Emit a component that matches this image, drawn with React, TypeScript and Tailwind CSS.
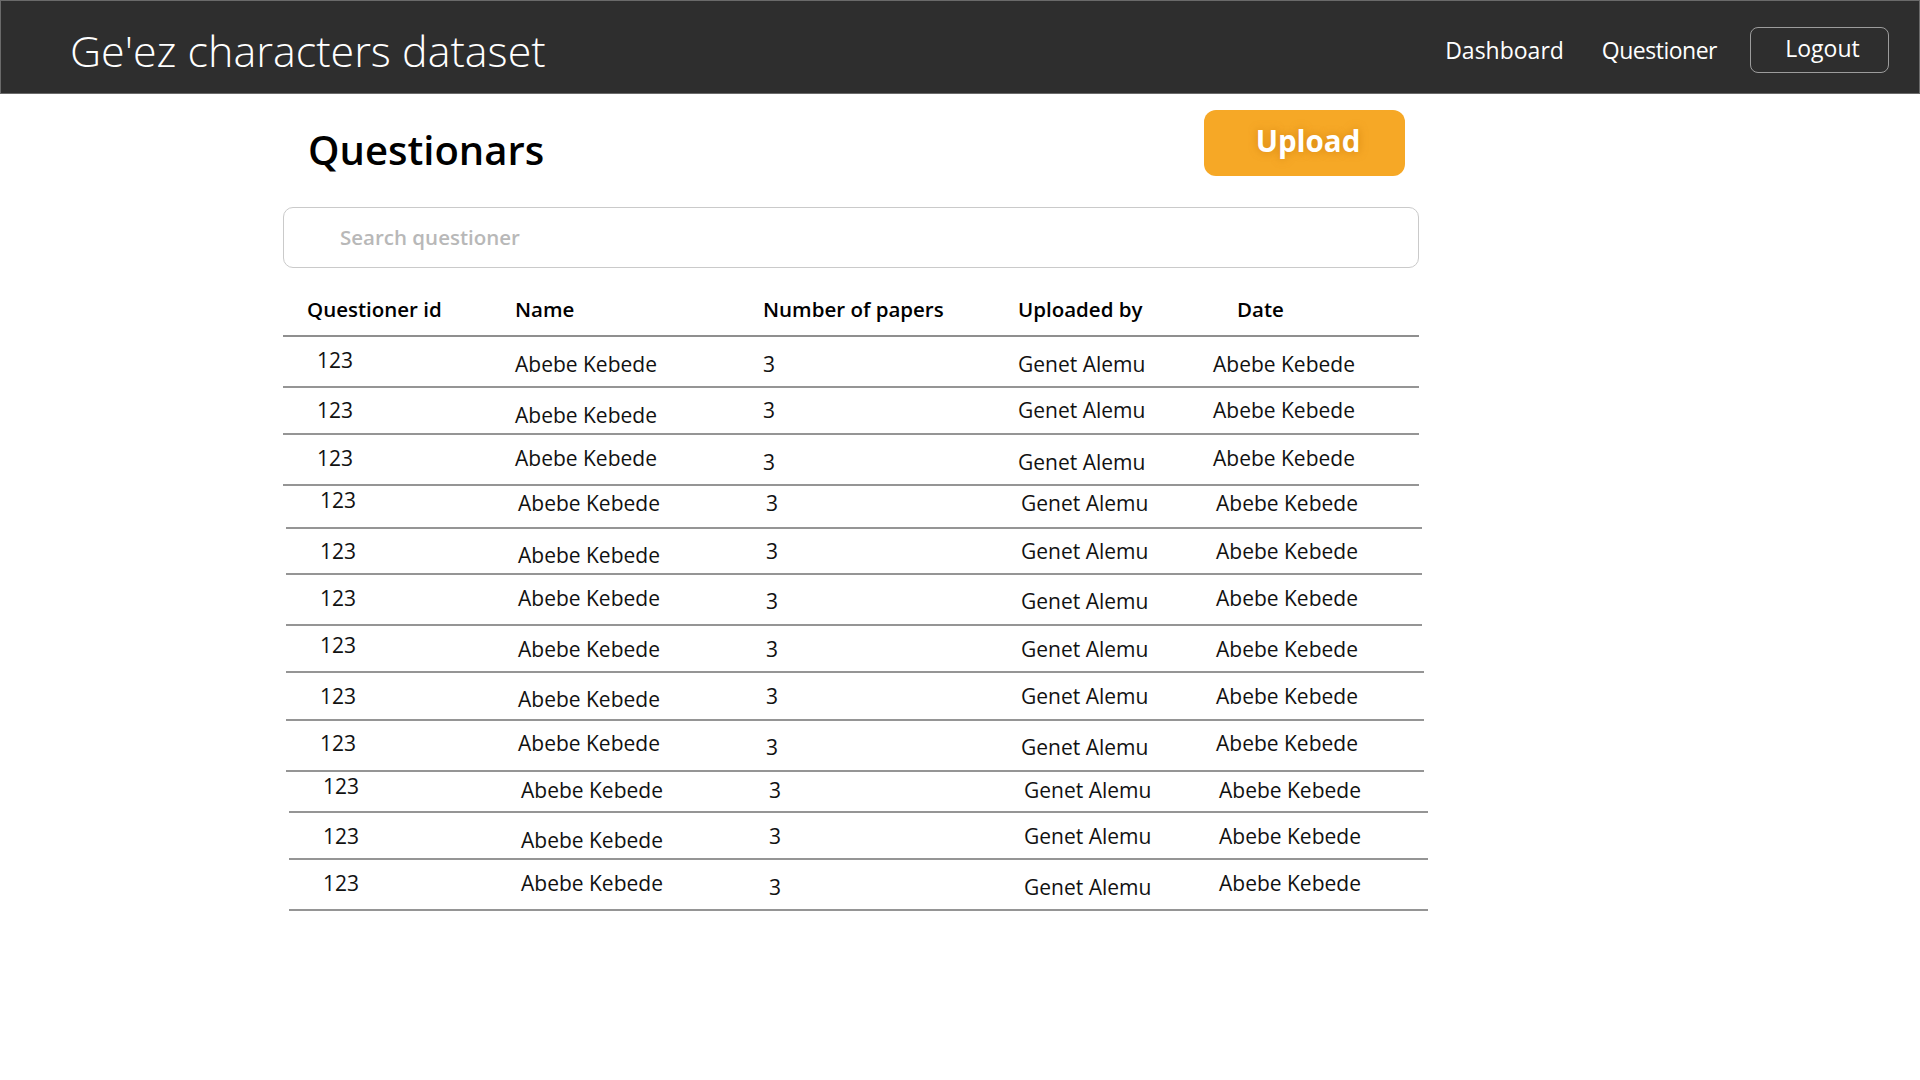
import React from "react";

type Pattern = "A" | "B" | "C";

interface Row {
  h: string;
  hi: string;
  lo: string;
  p: Pattern;
}

const groups: { ml: string; w: string; rows: Row[] }[] = [
  {
    ml: "ml-0",
    w: "w-[1136px]",
    rows: [
      { h: "h-[51px]", hi: "pt-[9px]", lo: "pt-[13px]", p: "A" },
      { h: "h-[47px]", hi: "pt-[8px]", lo: "pt-[13px]", p: "B" },
      { h: "h-[51px]", hi: "pt-[9px]", lo: "pt-[13px]", p: "C" },
    ],
  },
  {
    ml: "ml-[3px]",
    w: "w-[1136px]",
    rows: [
      { h: "h-[43px]", hi: "pt-0", lo: "pt-[3px]", p: "A" },
      { h: "h-[46px]", hi: "pt-[8px]", lo: "pt-[12px]", p: "B" },
      { h: "h-[51px]", hi: "pt-[9px]", lo: "pt-[12px]", p: "C" },
    ],
  },
  {
    ml: "ml-[3px]",
    w: "w-[1138px]",
    rows: [
      { h: "h-[47px]", hi: "pt-[5px]", lo: "pt-[9px]", p: "A" },
      { h: "h-[48px]", hi: "pt-[9px]", lo: "pt-[12px]", p: "B" },
      { h: "h-[51px]", hi: "pt-[8px]", lo: "pt-[12px]", p: "C" },
    ],
  },
  {
    ml: "ml-[6px]",
    w: "w-[1139px]",
    rows: [
      { h: "h-[41px]", hi: "pt-0", lo: "pt-[4px]", p: "A" },
      { h: "h-[47px]", hi: "pt-[9px]", lo: "pt-[13px]", p: "B" },
      { h: "h-[51px]", hi: "pt-[9px]", lo: "pt-[13px]", p: "C" },
    ],
  },
];

// which cells sit lower per pattern: [id, name, papers, uploader, date]
const lowMap: Record<Pattern, boolean[]> = {
  A: [false, true, true, true, true],
  B: [false, true, false, false, false],
  C: [false, false, true, true, false],
};

const widths = ["w-[198px]", "w-[248px]", "w-[255px]", "w-[195px]", "flex-1"];
const values = ["123", "Abebe Kebede", "3", "Genet Alemu", "Abebe Kebede"];

export default function App() {
  return (
    <div
      className="min-h-screen w-full bg-white text-black"
      style={{ fontFamily: '"Open Sans", "Noto Sans", sans-serif' }}
    >
      {/* Top bar */}
      <header className="flex h-[94px] items-center justify-between border border-[#6a6a6a] bg-[#2e2e2e] pl-[69px] pr-[30px] text-white">
        <h1 className="mt-[6px] text-[43px] font-light leading-none">
          Ge'ez characters dataset
        </h1>
        <nav className="mt-[6px] flex items-center">
          <a className="text-[23px] leading-none">Dashboard</a>
          <a className="ml-[38px] text-[23px] leading-none tracking-[-0.5px]">Questioner</a>
          <button className="ml-[33px] flex h-[46px] w-[139px] items-center justify-center rounded-[8px] border border-[#9c9c9c] pl-[6px] text-[23px] leading-none">
            <span className="-mt-[4px]">Logout</span>
          </button>
        </nav>
      </header>

      {/* Main */}
      <main className="ml-[283px] w-[1136px]">
        <div className="flex items-start justify-between pl-[25px] pr-[14px] pt-[16px]">
          <h2 className="mt-[20px] text-[40px] font-semibold leading-[40px]">Questionars</h2>
          <button className="flex h-[66px] w-[201px] items-center justify-center rounded-[12px] bg-[#f6a826] pl-[7px] text-[29.5px] font-bold leading-none text-white [text-shadow:0_0_8px_rgba(190,110,0,0.55)]">
            <span className="-mt-[4px]">Upload</span>
          </button>
        </div>

        <div className="mt-[31px] flex h-[61px] items-center rounded-[10px] border border-[#cacaca] pl-[56px]">
          <input
            className="w-full bg-transparent text-[20.5px] font-semibold text-black outline-none placeholder:text-[#b8b8b8]"
            placeholder="Search questioner"
          />
        </div>

        {/* Table header */}
        <div className="flex h-[69px] border-b-2 border-[#8f8f8f] pl-[24px] pt-[27px] text-[20.5px] font-semibold leading-[28px]">
          <div className="w-[208px]">Questioner id</div>
          <div className="w-[248px]">Name</div>
          <div className="w-[255px]">Number of papers</div>
          <div className="w-[219px]">Uploaded by</div>
          <div className="flex-1">Date</div>
        </div>

        {/* Table body */}
        {groups.map((g, gi) => (
          <div key={gi} className={`${g.w} ${g.ml}`}>
            {g.rows.map((r, ri) => (
              <div
                key={ri}
                className={`flex border-b-2 border-[#959595] pl-[34px] text-[21px] leading-[28px] text-[#111] [font-weight:370] ${r.h}`}
              >
                {values.map((v, ci) => (
                  <div key={ci} className={`${widths[ci]} ${lowMap[r.p][ci] ? r.lo : r.hi}`}>
                    {v}
                  </div>
                ))}
              </div>
            ))}
          </div>
        ))}
      </main>
    </div>
  );
}
